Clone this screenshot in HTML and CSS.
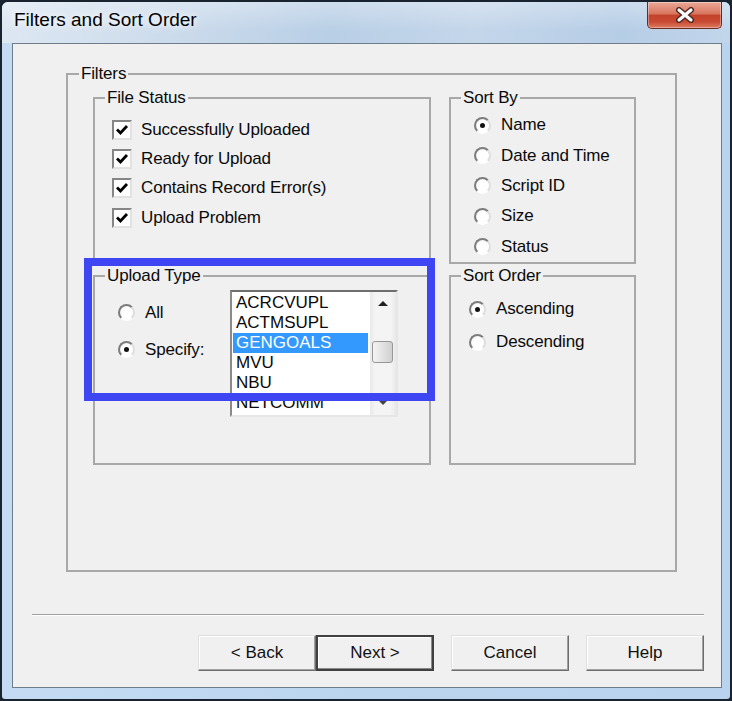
FILE: index.html
```html
<!DOCTYPE html>
<html lang="en">
<head>
  <meta charset="UTF-8" />
  <title>Filters and Sort Order</title>
  <link rel="stylesheet" href="styles.css">
</head>
<body>
  <div class="window">
    <div class="titlebar">
      <span class="title">Filters and Sort Order</span>
      <div class="close-btn">
        <svg width="24" height="16" viewBox="0 0 24 16">
          <path d="M6 3 L18 13 M18 3 L6 13" stroke="#4a2a24" stroke-width="6" stroke-linecap="round"/>
          <path d="M6 3 L18 13 M18 3 L6 13" stroke="#ffffff" stroke-width="3.2" stroke-linecap="round"/>
        </svg>
      </div>
    </div>

    <div class="client">
      <fieldset class="group filters">
        <legend>Filters</legend>
        <div class="filter-grid">

          <fieldset class="group file-status">
            <legend>File Status</legend>
            <div class="check-list">
              <div class="check-row"><span class="checkbox"><svg width="16" height="16" viewBox="0 0 16 16"><polyline points="3,7.5 6.5,11 13,4" fill="none" stroke="#000" stroke-width="2.8"/></svg></span>Successfully Uploaded</div>
              <div class="check-row"><span class="checkbox"><svg width="16" height="16" viewBox="0 0 16 16"><polyline points="3,7.5 6.5,11 13,4" fill="none" stroke="#000" stroke-width="2.8"/></svg></span>Ready for Upload</div>
              <div class="check-row"><span class="checkbox"><svg width="16" height="16" viewBox="0 0 16 16"><polyline points="3,7.5 6.5,11 13,4" fill="none" stroke="#000" stroke-width="2.8"/></svg></span>Contains Record Error(s)</div>
              <div class="check-row"><span class="checkbox"><svg width="16" height="16" viewBox="0 0 16 16"><polyline points="3,7.5 6.5,11 13,4" fill="none" stroke="#000" stroke-width="2.8"/></svg></span>Upload Problem</div>
            </div>
          </fieldset>

          <fieldset class="group sort-by">
            <legend>Sort By</legend>
            <div class="radio-list">
              <div class="radio-row"><span class="radio on"></span>Name</div>
              <div class="radio-row"><span class="radio"></span>Date and Time</div>
              <div class="radio-row"><span class="radio"></span>Script ID</div>
              <div class="radio-row"><span class="radio"></span>Size</div>
              <div class="radio-row"><span class="radio"></span>Status</div>
            </div>
          </fieldset>

          <fieldset class="group upload-type">
            <legend>Upload Type</legend>
            <div class="upload-body">
              <div class="upload-options">
                <div class="radio-row"><span class="radio"></span>All</div>
                <div class="radio-row"><span class="radio on"></span>Specify:</div>
              </div>
              <div class="listbox">
                <ul class="list-items">
                  <li>ACRCVUPL</li>
                  <li>ACTMSUPL</li>
                  <li class="selected">GENGOALS</li>
                  <li>MVU</li>
                  <li>NBU</li>
                  <li>NETCOMM</li>
                </ul>
                <div class="scrollbar">
                  <div class="scroll-btn"><span class="arrow-up"></span></div>
                  <div class="track"><span class="thumb"></span></div>
                  <div class="scroll-btn"><span class="arrow-down"></span></div>
                </div>
              </div>
            </div>
          </fieldset>

          <fieldset class="group sort-order">
            <legend>Sort Order</legend>
            <div class="radio-list">
              <div class="radio-row"><span class="radio on"></span>Ascending</div>
              <div class="radio-row"><span class="radio"></span>Descending</div>
            </div>
          </fieldset>

        </div>
      </fieldset>

      <div class="separator"></div>

      <div class="buttons">
        <div class="pair">
          <button class="btn">&lt; Back</button>
          <button class="btn default">Next &gt;</button>
        </div>
        <button class="btn">Cancel</button>
        <button class="btn">Help</button>
      </div>
    </div>

    <div class="highlight"></div>
  </div>
</body>
</html>
```

FILE: styles.css
```css
* {
  box-sizing: border-box;
}

body {
  margin: 0;
  background: #1a2633;
  font-family: "Liberation Sans", Arial, sans-serif;
  font-size: 17px;
  letter-spacing: -0.15px;
  color: #0a0a0a;
}

.window {
  position: relative;
  width: 732px;
  height: 701px;
  border: 2px solid #18232f;
  border-radius: 8px 8px 5px 5px;
  background: linear-gradient(to right, #c4dbf3, #bcd5ef 50%, #b9d3ee);
  padding: 0 8px 11px 10px;
  display: flex;
  flex-direction: column;
  overflow: hidden;
}

.titlebar {
  display: flex;
  height: 41px;
  margin: 0 -8px 0 -10px;
  padding-left: 12px;
  background:
    linear-gradient(to bottom, rgba(255, 255, 255, 0.3), rgba(255, 255, 255, 0) 70%),
    linear-gradient(to right, #dce7f2 0%, #cddcec 22%, #b9cfe6 45%, #c4d6ea 65%, #b6cde6 85%, #c2d6eb 100%);
}

.title {
  align-self: center;
  margin-bottom: 5px;
  font-size: 19px;
  letter-spacing: 0;
  color: #000;
  text-shadow: 0 0 6px #fff, 0 0 12px rgba(255, 255, 255, 0.8);
}

.close-btn {
  margin-left: auto;
  margin-right: 8px;
  width: 75px;
  height: 27px;
  border: 1px solid #6b2a20;
  border-top: none;
  border-radius: 0 0 5px 5px;
  background: linear-gradient(#eaa998, #d8755f 45%, #c3422b 52%, #c84a32 75%, #dc7b60);
  box-shadow: inset 0 0 0 1px rgba(255, 255, 255, 0.35);
  display: flex;
  align-items: center;
  justify-content: center;
}

.client {
  flex: 1;
  border: 1px solid #6f7d8b;
  background: #f0f0f0;
  padding-top: 20px;
}

/* group boxes */
.group {
  margin: 0;
  border: 2px solid #a8a8a8;
  min-width: 0;
}

.group legend {
  padding: 0 2px;
  line-height: 20px;
}

.filters {
  width: 611px;
  margin-left: 53px;
  padding: 4px 0 105px 11px;
}

.filter-grid {
  display: grid;
  grid-template-columns: 338px 187px;
  column-gap: 18px;
  row-gap: 2px;
  margin-left: 14px;
}

.file-status {
  padding: 7px 0 0 10px;
}

.check-list {
  padding-left: 7px;
}

.check-row {
  display: flex;
  align-items: center;
  gap: 9px;
  height: 29.4px;
}

.checkbox {
  width: 20px;
  height: 20px;
  border: 2px solid;
  border-color: #858585 #e2e2e2 #e2e2e2 #858585;
  background: #fff;
  display: flex;
}

.sort-by {
  padding: 2px 0 0 10px;
}

.sort-by .radio-list {
  padding-left: 13px;
}

.sort-by .radio-row {
  height: 30.4px;
}

.sort-order {
  padding: 7px 0 0 10px;
}

.sort-order .radio-list {
  padding-left: 8px;
}

.sort-order .radio-row {
  height: 33px;
}

.radio-row {
  display: flex;
  align-items: center;
  gap: 10px;
}

.radio {
  width: 17px;
  height: 17px;
  border-radius: 50%;
  border: 2px solid;
  border-color: #7c7c7c #dedede #fff #7c7c7c;
  background: radial-gradient(circle at 60% 60%, #fff 50%, #ececec);
  display: flex;
  align-items: center;
  justify-content: center;
}

.radio.on::after {
  content: "";
  width: 5px;
  height: 5px;
  border-radius: 50%;
  background: #111;
}

.upload-type {
  padding: 4px 0 46px 10px;
}

.upload-body {
  display: grid;
  grid-template-columns: 112px 168px;
  padding-left: 13px;
}

.upload-options {
  display: flex;
  flex-direction: column;
  gap: 7px;
  padding-top: 8px;
}

.upload-options .radio-row {
  height: 30px;
}

/* list box */
.listbox {
  display: flex;
  width: 168px;
  height: 127px;
  border: 2px solid;
  border-color: #6e6e6e #e6e6e6 #e6e6e6 #8a8a8a;
  background: #fff;
  overflow: hidden;
}

.list-items {
  flex: 1;
  list-style: none;
  margin: 0;
  padding: 1px 0 0;
}

.list-items li {
  height: 20px;
  line-height: 20px;
  margin: 0 2px 0 1px;
  padding-left: 3px;
  letter-spacing: 0;
  white-space: nowrap;
}

.list-items li.selected {
  background: #3399ff;
  color: #fff;
  outline: 1px dotted #c8742c;
  outline-offset: -1px;
}

.scrollbar {
  width: 26px;
  display: flex;
  flex-direction: column;
  background: linear-gradient(to right, #e9e9e9, #f4f4f4 20%, #f4f4f4 80%, #e9e9e9);
}

.scroll-btn {
  height: 24px;
  display: flex;
  align-items: center;
  justify-content: center;
}

.arrow-up {
  border-left: 5px solid transparent;
  border-right: 5px solid transparent;
  border-bottom: 5px solid #222;
}

.arrow-down {
  border-left: 5px solid transparent;
  border-right: 5px solid transparent;
  border-top: 5px solid #444;
}

.track {
  flex: 1;
  padding: 25px 0 0 2px;
}

.thumb {
  display: block;
  width: 21px;
  height: 22px;
  border: 1px solid #979797;
  border-radius: 3px;
  background: linear-gradient(to right, #f4f4f4, #e2e2e2 50%, #d0d0d0);
}

/* bottom */
.separator {
  margin: 42px 17px 0 19px;
  border-top: 1px solid #a0a0a0;
  border-bottom: 1px solid #fff;
}

.buttons {
  display: flex;
  justify-content: flex-end;
  gap: 17px;
  margin-top: 19px;
  padding-right: 17px;
}

.pair {
  display: flex;
}

.btn {
  width: 118px;
  height: 36px;
  padding: 0;
  font: inherit;
  color: #111;
  background: #f0f0f0;
  border: 1px solid;
  border-color: #e0e0e0 #6e6e6e #6e6e6e #e0e0e0;
  box-shadow: inset -1px -1px 0 #a0a0a0, inset 1px 1px 0 #fff;
}

.btn.default {
  border: 2px solid #404040;
  box-shadow: inset -1px -1px 0 #8a8a8a, inset 1px 1px 0 #fff;
}

/* annotation rectangle over the upload type area */
.highlight {
  position: absolute;
  left: 82px;
  top: 256px;
  width: 351px;
  height: 143px;
  border: 8px solid #3e46f4;
}
```
